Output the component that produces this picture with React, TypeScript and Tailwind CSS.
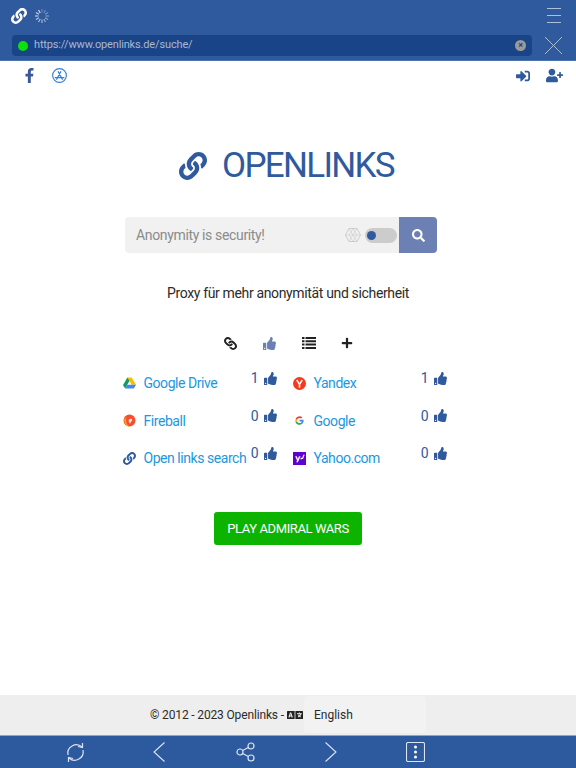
import React from "react";
import { FaLink, FaFacebookF, FaSignInAlt, FaUserPlus, FaSearch, FaThumbsUp, FaPlus, FaLanguage } from "react-icons/fa";

const font = { fontFamily: 'Roboto, "Noto Sans", sans-serif' };

function Drive() {
  return (
    <svg width="13" height="12" viewBox="0 0 24 22">
      <path d="M8 1h8l8 13h-8z" fill="#fbbc04" />
      <path d="M8 1 0 15l4 6 8-14z" fill="#0f9d58" />
      <path d="M4 21h16l4-7H8z" fill="#4285f4" />
    </svg>
  );
}
function Fire() {
  return (
    <svg width="13" height="13" viewBox="0 0 24 24">
      <circle cx="12" cy="12" r="11" fill="#f4502f" />
      <path d="M2 10c1 8 5 13 10 13C7 20 5 15 6 6z" fill="#f9a51a" />
      <path d="M11 10c3-2 6-1 6 1s-3 3-4 7c-2-2-3-6-2-8z" fill="#fff" opacity=".85" />
    </svg>
  );
}
function GoogleG() {
  return (
    <svg width="9" height="9" viewBox="0 0 24 24">
      <path d="M23 12.3c0-.9-.1-1.600-.2-2.300H12v4.400h6.200c-.3 1.400-1.100 2.600-2.300 3.400v2.800h3.700c2.100-2 3.400-4.900 3.400-8.300z" fill="#4285f4" />
      <path d="M12 23.500c3.100 0 5.700-1 7.600-2.800l-3.700-2.900c-1 .7-2.300 1.100-3.900 1.100-3 0-5.500-2-6.400-4.700H1.800v2.900c1.900 3.800 5.800 6.400 10.200 6.400z" fill="#34a853" />
      <path d="M5.600 14.200c-.5-1.400-.5-2.900 0-4.300V7H1.800c-1.600 3.200-1.600 6.900 0 10.100z" fill="#fbbc05" />
      <path d="M12 5c1.700 0 3.200.6 4.400 1.700l3.300-3.300C17.700 1.500 15.100.5 12 .5 7.600.5 3.700 3.100 1.800 7l3.800 2.900C6.500 7 9 5 12 5z" fill="#ea4335" />
    </svg>
  );
}
function YandexIcon() {
  return (
    <svg width="13" height="13" viewBox="0 0 24 24">
      <circle cx="12" cy="12" r="12" fill="#f5391f" />
      <path d="M7 5.500l5 8 5-8M12 13.500V20" fill="none" stroke="#fff" strokeWidth="2.800" />
    </svg>
  );
}
function YahooIcon() {
  return (
    <svg width="13" height="13" viewBox="0 0 24 24">
      <rect width="24" height="24" fill="#5f01d1" />
      <path d="M4 8h3l2 5 2-5h3l-5 11H6l1.500-3.200zM14.500 10.500h3l-1 3h-3zM19 5h2.500l-3 8h-2z" fill="#fff" />
    </svg>
  );
}
function AppStore() {
  return (
    <svg width="15" height="15" viewBox="0 0 24 24" fill="none" stroke="#2f7fdc">
      <circle cx="12" cy="12" r="11" strokeWidth="1.800" />
      <path d="M10 6l6.500 12M14 6 7.500 18M5 15.500h14" strokeWidth="2" strokeLinecap="round" />
    </svg>
  );
}
function ListIcon() {
  return (
    <svg width="14" height="12" viewBox="0 0 14 12" fill="#222">
      <path d="M0 0h2.500v2H0zM3.500 0H14v2H3.500zM0 3.300h2.500v2H0zM3.500 3.300H14v2H3.500zM0 6.600h2.500v2H0zM3.500 6.600H14v2H3.500zM0 9.900h2.500v2H0zM3.500 9.900H14v2H3.500z" />
    </svg>
  );
}
function Spinner() {
  const items = Array.from({ length: 12 }, (_, i) => i);
  return (
    <svg width="16" height="16" viewBox="0 0 16 16">
      {items.map((i) => (
        <line key={i} x1="8" y1="1" x2="8" y2="4.500" stroke="#fff" strokeWidth="1.200" opacity={0.25 + (i / 12) * 0.6} transform={`rotate(${i * 30} 8 8)`} />
      ))}
    </svg>
  );
}
function Hex() {
  return (
    <svg width="16" height="14" viewBox="0 0 16 14" fill="none" stroke="#c4c4c4" strokeWidth=".8">
      <path d="M4 .5h8L15.500 7 12 13.500H4L.5 7z" />
      <path d="M4 .5 12 13.500M12 .5 4 13.500M.5 7h15M8 .5 4 7l4 6.500L12 7z" strokeWidth=".5" />
    </svg>
  );
}

const rows = [
  [{ icon: <Drive />, name: "Google Drive", n: 1 }, { icon: <YandexIcon />, name: "Yandex", n: 1 }],
  [{ icon: <Fire />, name: "Fireball", n: 0 }, { icon: <GoogleG />, name: "Google", n: 0 }],
  [{ icon: <FaLink className="text-[13px] text-[#2f5a9e]" />, name: "Open links search", n: 0 }, { icon: <YahooIcon />, name: "Yahoo.com", n: 0 }],
];

function Item({ icon, name, n }: { icon: React.ReactNode; name: string; n: number }) {
  return (
    <div className="flex w-[155px] items-start">
      <div className="mt-[8px] flex h-[14px] w-[13px] items-center justify-center">{icon}</div>
      <span className="ml-[8px] mt-[5px] flex-1 whitespace-nowrap text-[14px] leading-[20px] tracking-[-0.45px] text-[#1b98e0]">{name}</span>
      <div className="mr-[1px] flex items-center gap-[5px] text-[14px] leading-[20px] text-[#2f5a9e]">
        <span>{n}</span>
        <FaThumbsUp className="text-[13px]" />
      </div>
    </div>
  );
}

export default function App() {
  return (
    <div className="flex h-[768px] w-[576px] flex-col overflow-hidden bg-white" style={font}>
      <header className="h-[61px] border-b border-[#4d74ad] bg-[#2f5a9e]">
        <div className="flex h-[35px] items-center justify-between pb-[4px] pl-[11px] pr-[15px]">
          <div className="flex items-center gap-[7px]">
            <FaLink className="text-[16px] text-white" />
            <Spinner />
          </div>
          <div className="flex w-[14px] flex-col gap-[6px]">
            <div className="h-px bg-[#aebfd9]" />
            <div className="h-px bg-[#aebfd9]" />
            <div className="h-px bg-[#aebfd9]" />
          </div>
        </div>
        <div className="flex items-center pl-[12px] pr-[14px]">
          <div className="flex h-[21px] w-[521px] items-center rounded-[4px] bg-[#1a4488] pl-[6px] pr-[6px]">
            <span className="h-[10px] w-[10px] rounded-full bg-[#0ee00e]" />
            <span className="ml-[6px] flex-1 text-[11px] tracking-[-0.15px] text-[#a9b7cf]">https://www.openlinks.de/suche/</span>
            <span className="flex h-[11px] w-[11px] items-center justify-center rounded-full bg-[#9a9a9a] text-[9px] font-bold leading-none text-[#1a4488]">×</span>
          </div>
          <svg className="ml-[13px]" width="17" height="17" viewBox="0 0 17 17" stroke="#aebfd9" strokeWidth="1"><path d="M0 0l17 17M17 0 0 17" /></svg>
        </div>
      </header>

      <main className="flex flex-1 flex-col items-center">
        <div className="flex w-full items-center justify-between pl-[22px] pr-[13px] pt-[6px]">
          <div className="flex items-center gap-[15px]">
            <FaFacebookF className="text-[15px] text-[#3b5998]" />
            <AppStore />
          </div>
          <div className="flex items-center gap-[16px]">
            <FaSignInAlt className="text-[14px] text-[#2f5a9e]" />
            <FaUserPlus className="text-[17px] text-[#2f5a9e]" />
          </div>
        </div>

        <div className="mr-[3px] mt-[59px] flex items-center gap-[15px] text-[#2f5a9e]">
          <FaLink className="text-[28px]" />
          <span className="text-[35px] leading-[46px] tracking-[-1.7px]">OPENLINKS</span>
        </div>

        <div className="mr-[14px] mt-[28px] flex h-[36px] w-[312px]">
          <div className="flex flex-1 items-center rounded-l-[4px] bg-[#f1f1f1] pl-[11px] pr-[2px]">
            <span className="flex-1 text-[14px] tracking-[-0.35px] text-[#8b8b8b]">Anonymity is security!</span>
            <Hex />
            <div className="ml-[4px] flex h-[15px] w-[32px] items-center rounded-full bg-[#cccccc] pl-[2px]">
              <span className="h-[9px] w-[9px] rounded-full bg-[#2f5a9e]" />
            </div>
          </div>
          <div className="flex w-[38px] items-center justify-center rounded-r-[4px] bg-[#6c80b4]">
            <FaSearch className="text-[13px] text-white" />
          </div>
        </div>

        <p className="mt-[30px] text-[14px] leading-[20px] tracking-[-0.35px] text-[#2b2b2b]">Proxy für mehr anonymität und sicherheit</p>

        <div className="mt-[30px] flex h-[20px] items-center gap-[26px]">
          <FaLink className="rotate-90 text-[13px] text-[#222]" />
          <FaThumbsUp className="text-[13px] text-[#6c80b4]" />
          <ListIcon />
          <FaPlus className="-ml-[1px] text-[12px] text-[#222]" />
        </div>

        <div className="mr-[6px] mt-[15px] flex flex-col gap-[12.500px]">
          {rows.map((r, i) => (
            <div key={i} className="flex gap-[15px]">
              <Item {...r[0]} />
              <Item {...r[1]} />
            </div>
          ))}
        </div>

        <button className="mt-[44px] h-[33px] w-[148px] rounded-[3px] bg-[#0cb400] text-[13px] tracking-[-0.4px] text-white">PLAY ADMIRAL WARS</button>
      </main>

      <footer className="flex h-[41px] items-stretch border-b border-[#8fa5c8] bg-[#eeeeee] pb-[2px] pl-[150px] pt-[1px] text-[12px] text-[#2b2b2b]">
        <div className="flex w-[153px] items-center justify-between whitespace-nowrap">
          <span className="tracking-[-0.15px]">© 2012 - 2023 Openlinks -</span>
          <FaLanguage className="text-[16px] text-[#222]" />
        </div>
        <div className="ml-[1px] flex w-[122px] items-center rounded-[4px] bg-[#f2f2f2] pl-[10px]">English</div>
      </footer>

      <nav className="flex h-[32px] items-center bg-[#2d5a9e] pl-[33px]">
        <div className="flex w-[85px] justify-center">
          <svg width="21" height="21" viewBox="0 0 21 21" fill="none" stroke="#dce4f0" strokeWidth="1.200">
            <path d="M3 13A8.500 8.500 0 0 1 17 5M18 8a8.500 8.500 0 0 1-14 8" />
            <path d="M13 4.500l4.500 1V1M8 16.500l-4.500-1V20" />
          </svg>
        </div>
        <div className="flex w-[85px] justify-center pr-[2px]">
          <svg width="13" height="20" viewBox="0 0 13 20" fill="none" stroke="#dce4f0" strokeWidth="1.100"><path d="M11.500 .5 1 10l10.500 9.500" /></svg>
        </div>
        <div className="flex w-[85px] justify-center">
          <svg width="20" height="20" viewBox="0 0 20 20" fill="none" stroke="#dce4f0" strokeWidth="1.200">
            <circle cx="4" cy="10" r="3" /><circle cx="15" cy="4" r="3" /><circle cx="15" cy="16" r="3" />
            <path d="M6.700 8.500 12.300 5.500M6.700 11.500l5.600 3" />
          </svg>
        </div>
        <div className="flex w-[85px] justify-center">
          <svg width="13" height="20" viewBox="0 0 13 20" fill="none" stroke="#dce4f0" strokeWidth="1.100"><path d="M1.500 .5 12 10 1.500 19.500" /></svg>
        </div>
        <div className="flex w-[85px] justify-center">
          <svg width="19" height="20" viewBox="0 0 19 20" fill="none" stroke="#dce4f0" strokeWidth="1.100">
            <rect x=".5" y=".5" width="18" height="19" rx="1.500" />
            <circle cx="9.500" cy="5" r="1.500" fill="#fff" stroke="none" /><circle cx="9.500" cy="10" r="1.500" fill="#fff" stroke="none" /><circle cx="9.500" cy="15" r="1.500" fill="#fff" stroke="none" />
          </svg>
        </div>
      </nav>
    </div>
  );
}
